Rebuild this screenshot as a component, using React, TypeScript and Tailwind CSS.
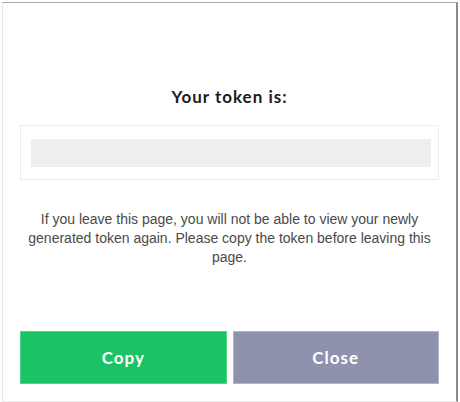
import React from 'react';

const App: React.FC = () => {
  return (
    <div className="w-[460px] h-[402px] bg-white pt-[2px] pl-[2px]">
      <div className="w-[456px] h-[400px] bg-white border-t border-t-[#a8a8a8] border-l border-l-[#e6e6e6] border-r-2 border-r-[#8a8a8a] border-b border-b-[#ededed] flex flex-col px-[17px]">
        {/* Title */}
        <h2
          className="mt-[84px] text-center text-[17px] leading-[20px] font-bold tracking-[1px] text-[#1c1c1c]"
          style={{ fontFamily: 'Lato, "Open Sans", sans-serif' }}
        >
          Your token is:
        </h2>

        {/* Token box */}
        <div className="mt-[18px] h-[55px] border border-[#ececec] pl-[10px] pr-[7px] pt-[13px] pb-[12px]">
          <div className="h-full bg-[#eeeeee]" />
        </div>

        {/* Warning */}
        <p
          className="mt-[30px] mx-auto w-[412px] text-center text-[14px] leading-[19px] text-[#4a4a4a]"
          style={{ fontFamily: '"Liberation Sans", Arial, sans-serif' }}
        >
          If you leave this page, you will not be able to view your newly generated token again. Please copy the token
          before leaving this page.
        </p>

        {/* Actions */}
        <div className="mt-[64px] flex gap-[6px]">
          <button
            className="flex-1 h-[53px] bg-[#1ac464] border border-[#4fd68a] text-white text-[17px] font-bold tracking-[1px]"
            style={{ fontFamily: 'Lato, "Open Sans", sans-serif' }}
          >
            Copy
          </button>
          <button
            className="flex-1 h-[53px] bg-[#8f92ad] border border-[#b3b5c8] text-white text-[17px] font-bold tracking-[1px]"
            style={{ fontFamily: 'Lato, "Open Sans", sans-serif' }}
          >
            Close
          </button>
        </div>
      </div>
    </div>
  );
};

export default App;
